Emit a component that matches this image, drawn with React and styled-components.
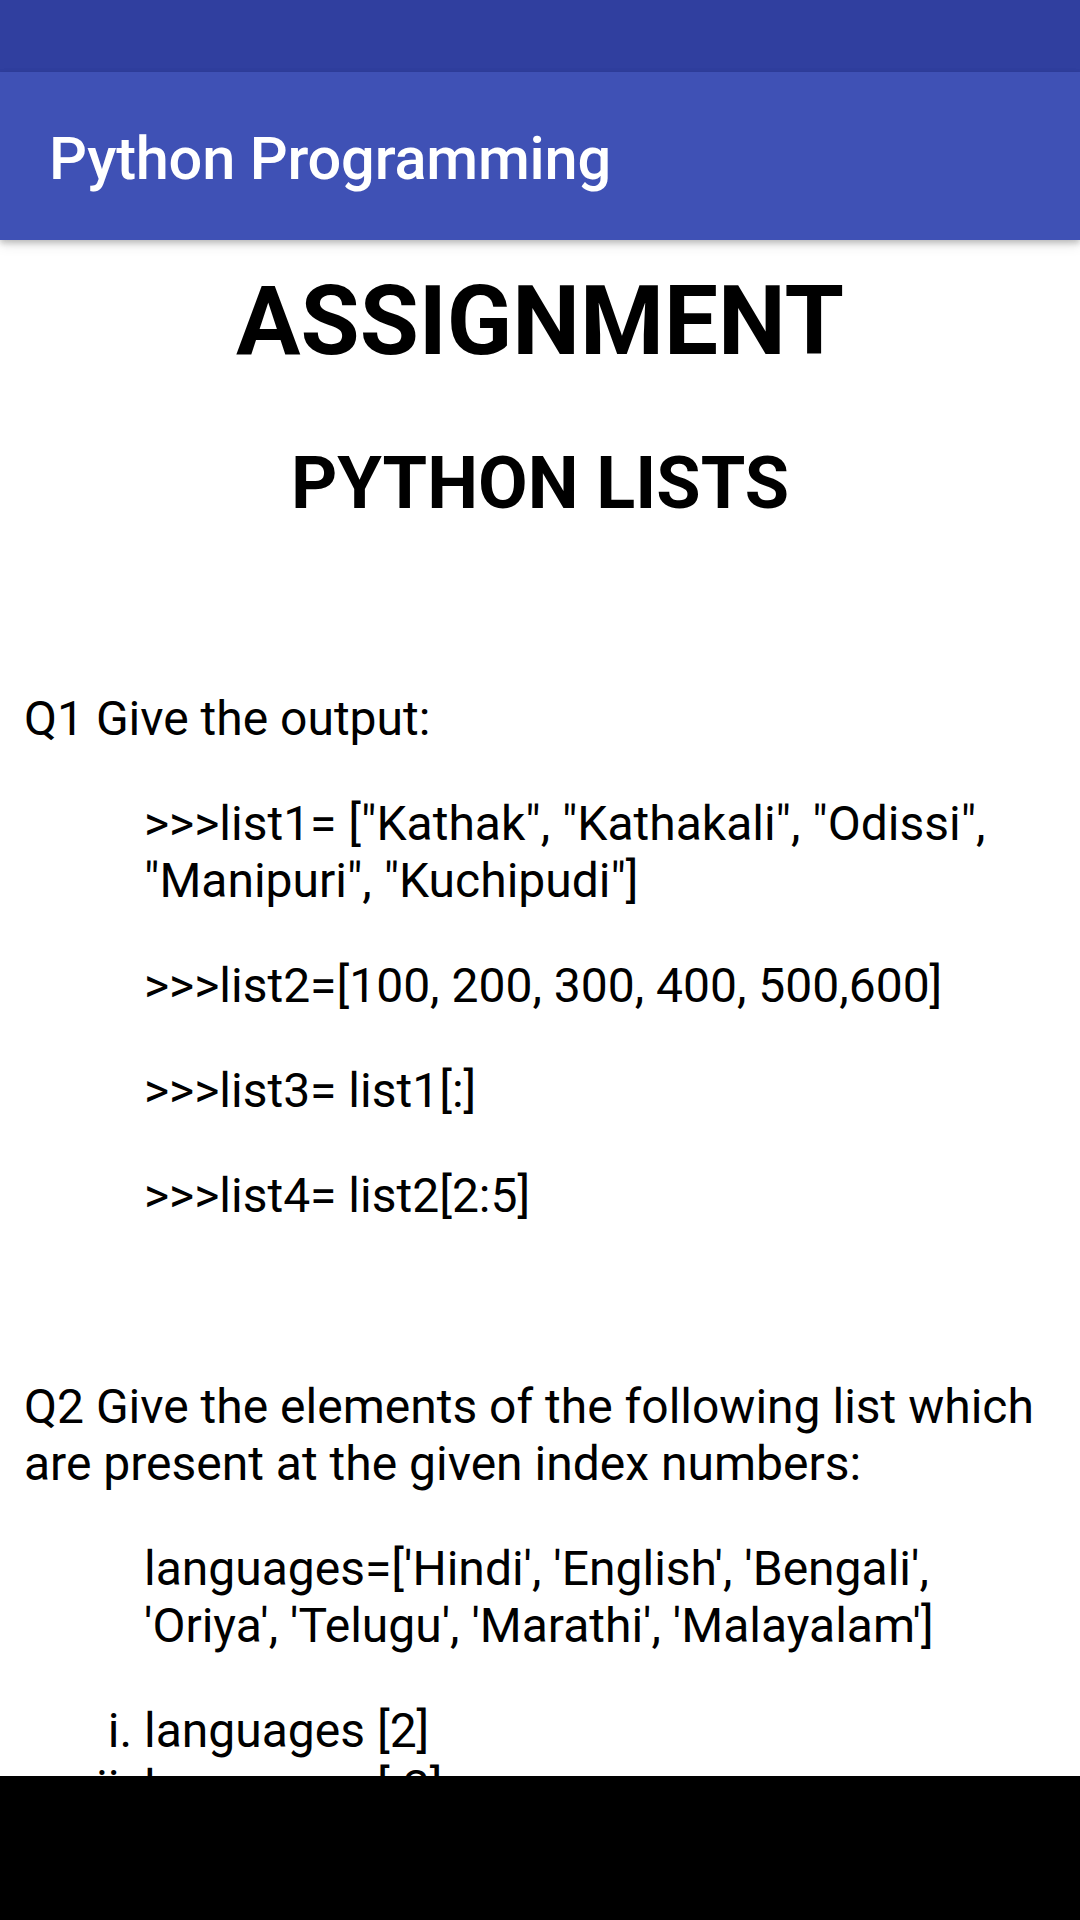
import React from "react";
import styled, { createGlobalStyle } from "styled-components";

const GlobalStyle = createGlobalStyle`
  html, body {
    margin: 0;
    padding: 0;
    background: #ffffff;
  }
  body {
    font-family: Roboto, "Noto Sans", "Liberation Sans", sans-serif;
  }
  * { box-sizing: border-box; }
`;

const Screen = styled.div`
  width: 1080px;
  height: 1920px;
  display: flex;
  flex-direction: column;
  overflow: hidden;
  background: #ffffff;
`;

const StatusBar = styled.div`
  height: 72px;
  flex: 0 0 72px;
  background: #303f9f;
`;

const AppBar = styled.header`
  height: 168px;
  flex: 0 0 168px;
  background: #3f51b5;
  display: flex;
  align-items: center;
  padding: 6px 48px 0 49px;
  position: relative;
  z-index: 2;
  box-shadow: 0 3px 6px rgba(0, 0, 0, 0.22), 0 6px 12px rgba(0, 0, 0, 0.08);
`;

const AppTitle = styled.h1`
  margin: 0;
  font-family: Roboto, "Liberation Sans", sans-serif;
  font-weight: 500;
  font-size: 59.5px;
  letter-spacing: -0.2px;
  line-height: normal;
  color: #ffffff;
`;

const Content = styled.main`
  flex: 1 1 auto;
  overflow: hidden;
  display: flow-root;
  padding: 25px 24px 0 24px;
  color: #000000;
  font-family: Roboto, "Liberation Sans", sans-serif;
  font-size: 48px;
  line-height: normal;
`;

const Heading = styled.h2`
  margin: 0 0 ${(p) => p.$gap}px 0;
  font-size: ${(p) => p.$size}px;
  font-weight: 700;
  line-height: normal;
  text-align: center;
`;

const Para = styled.p`
  margin: 0 0 48px 0;
  font-size: 48px;
  line-height: normal;
`;

const Spacer = styled.div`
  height: ${(p) => p.$h}px;
  margin: 0 0 48px 0;
`;

const Indented = styled.div`
  padding-left: 120px;
`;

const RomanList = styled.ol`
  list-style-type: lower-roman;
  margin: 0;
  padding-left: 120px;
  font-size: 48px;
  line-height: normal;
`;

const Item = styled.li`
  margin: 0;
`;

const NavBar = styled.div`
  height: 144px;
  flex: 0 0 144px;
  background: #000000;
`;

export default function App() {
  const q1Lines = [
    '>>>list1= ["Kathak", "Kathakali", "Odissi", "Manipuri", "Kuchipudi"]',
    ">>>list2=[100, 200, 300, 400, 500,600]",
    ">>>list3= list1[:]",
    ">>>list4= list2[2:5]",
  ];
  return (
    <>
      <GlobalStyle />
      <Screen>
        <StatusBar />
        <AppBar>
          <AppTitle>Python Programming</AppTitle>
        </AppBar>
        <Content>
          <Heading $size={96} $gap={64}>ASSIGNMENT</Heading>
          <Heading $size={72} $gap={60}>PYTHON LISTS</Heading>
          <Spacer $h={56} />
          <Para>Q1 Give the output:</Para>
          <Indented>
            {q1Lines.map((l) => (
              <Para key={l}>{l}</Para>
            ))}
          </Indented>
          <Spacer $h={58} />
          <Para>Q2 Give the elements of the following list which are present at the given index numbers:</Para>
          <Indented>
            <Para>languages=['Hindi', 'English', 'Bengali', 'Oriya', 'Telugu', 'Marathi', 'Malayalam']</Para>
          </Indented>
          <RomanList>
            <Item>languages [2]</Item>
            <Item>languages [-3]</Item>
          </RomanList>
        </Content>
        <NavBar />
      </Screen>
    </>
  );
}
